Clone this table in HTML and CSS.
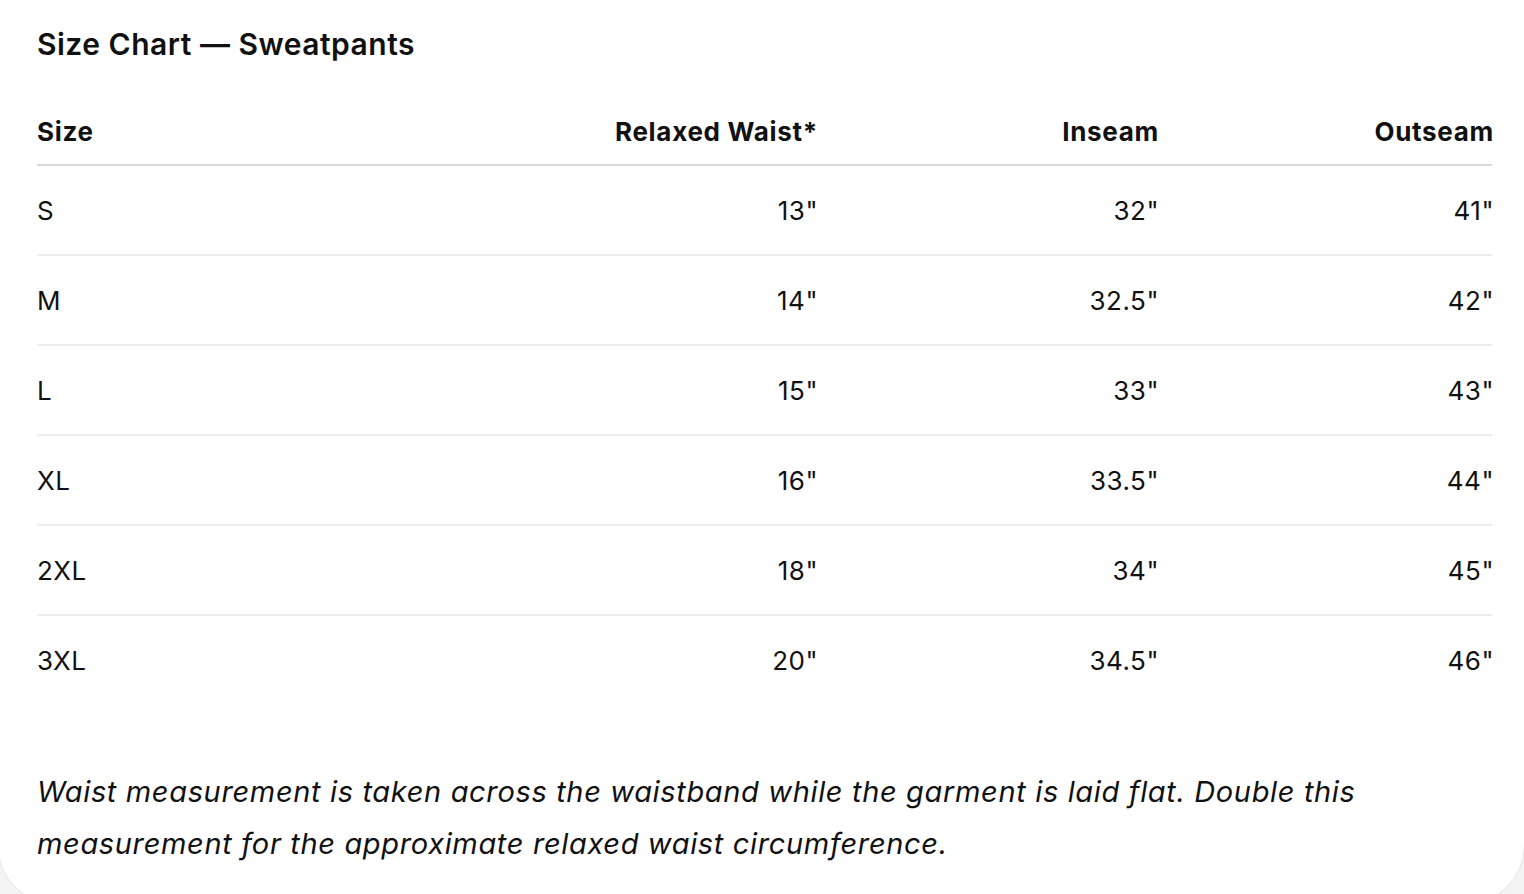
FILE: index.html
```html
<!DOCTYPE html>
<html lang="en">
<head>
<meta charset="utf-8">
<title>Size Chart — Sweatpants</title>
<link rel="stylesheet" href="styles.css">
</head>
<body>
<div class="card">
  <h2 class="title">Size Chart — Sweatpants</h2>
  <div class="table">
    <div class="row head">
      <div class="cell first">Size</div>
      <div class="cell">Relaxed Waist*</div>
      <div class="cell">Inseam</div>
      <div class="cell">Outseam</div>
    </div>
    <div class="row">
      <div class="cell first">S</div><div class="cell">13"</div><div class="cell">32"</div><div class="cell">41"</div>
    </div>
    <div class="row">
      <div class="cell first">M</div><div class="cell">14"</div><div class="cell">32.5"</div><div class="cell">42"</div>
    </div>
    <div class="row">
      <div class="cell first">L</div><div class="cell">15"</div><div class="cell">33"</div><div class="cell">43"</div>
    </div>
    <div class="row">
      <div class="cell first">XL</div><div class="cell">16"</div><div class="cell">33.5"</div><div class="cell">44"</div>
    </div>
    <div class="row">
      <div class="cell first">2XL</div><div class="cell">18"</div><div class="cell">34"</div><div class="cell">45"</div>
    </div>
    <div class="row last">
      <div class="cell first">3XL</div><div class="cell">20"</div><div class="cell">34.5"</div><div class="cell">46"</div>
    </div>
  </div>
  <p class="note">Waist measurement is taken across the waistband while the garment is laid flat. Double this measurement for the approximate relaxed waist circumference.</p>
</div>
</body>
</html>
```

FILE: styles.css
```css
html, body {
  margin: 0;
  padding: 0;
  background: #f4f4f4;
  overflow: hidden;
}
body {
  font-family: Inter, "Noto Sans", sans-serif;
  color: #111;
  height: 894px;
}
.card {
  background: #fff;
  margin: -60px 0 0 -3px;
  width: 1528px;
  border: 1px solid #e4e4e4;
  border-radius: 60px;
  padding: 85px 0 34px 39px;
  box-sizing: border-box;
}
.title {
  margin: 0;
  font-size: 30px;
  font-weight: 600;
  line-height: 36px;
  letter-spacing: 0.5px;
}
.table {
  margin-top: 51px;
  width: 1455px;
}
.row {
  display: grid;
  grid-template-columns: 439px 340px 341px 335px;
  height: 88px;
  align-items: center;
  border-bottom: 2px solid #ececec;
  font-size: 26px;
  letter-spacing: 0.5px;
}
.row.head {
  height: 51px;
  align-items: start;
  border-bottom: 2px solid #d9d9d9;
  font-weight: 700;
  letter-spacing: 0.7px;
}
.row.last {
  border-bottom: none;
}
.cell {
  text-align: right;
  margin-right: -2px;
}
.cell.first {
  text-align: left;
  margin-right: 0;
}
.row.head .cell {
  padding-top: 3px;
}
.note {
  margin: 62px 0 0;
  width: 1455px;
  font-size: 29px;
  font-style: italic;
  line-height: 52px;
  letter-spacing: 0.65px;
}
```
